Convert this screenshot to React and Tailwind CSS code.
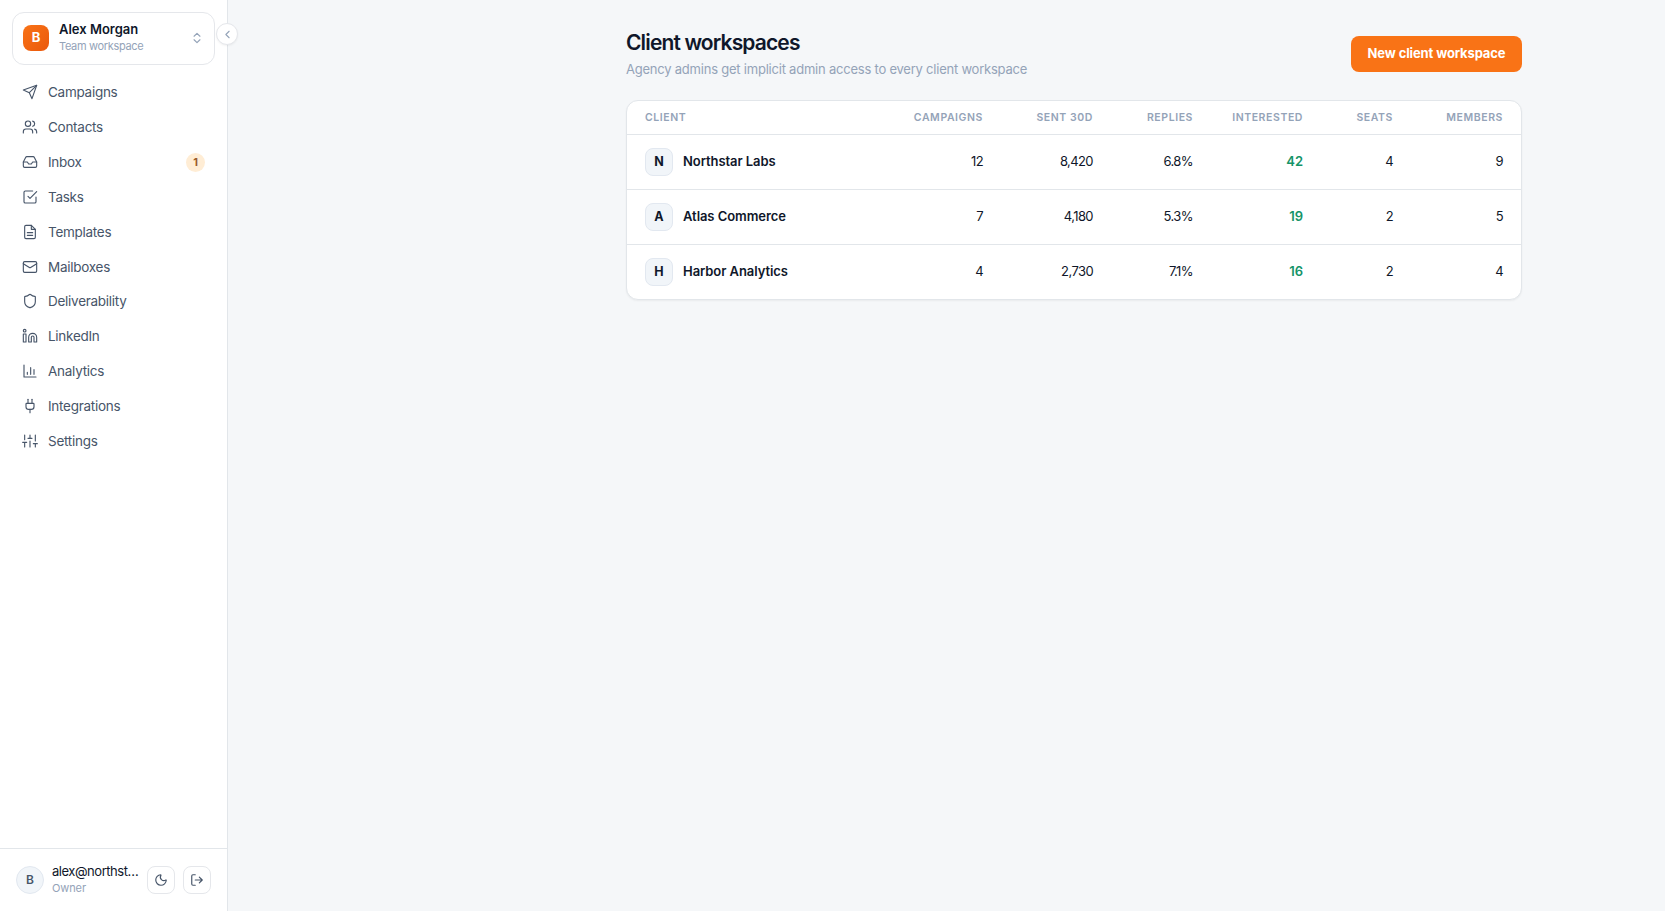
import React from "react";
import clsx from "clsx";
import {
  Users,
  Inbox,
  Mail,
  Shield,
  Linkedin,
  Plug,
  ChevronsUpDown,
  ChevronLeft,
  Moon,
} from "lucide-react";

const iconProps = {
  width: 16,
  height: 16,
  viewBox: "0 0 24 24",
  fill: "none",
  stroke: "currentColor",
  strokeWidth: 1.7,
  strokeLinecap: "round",
  strokeLinejoin: "round",
};

const SendIcon = () => (
  <svg {...iconProps}>
    <path d="M22 2L11 13" />
    <path d="M22 2l-7 20-4-9-9-4 20-7z" />
  </svg>
);

const TaskIcon = () => (
  <svg {...iconProps}>
    <path d="M9 11l3 3L22 4" />
    <path d="M21 12v7a2 2 0 0 1-2 2H5a2 2 0 0 1-2-2V5a2 2 0 0 1 2-2h11" />
  </svg>
);

const DocIcon = () => (
  <svg {...iconProps}>
    <path d="M14 2H6a2 2 0 0 0-2 2v16a2 2 0 0 0 2 2h12a2 2 0 0 0 2-2V8z" />
    <path d="M14 2v6h6M8 13h8M8 17h8" />
  </svg>
);

const ChartIcon = () => (
  <svg {...iconProps}>
    <path d="M3 3v18h18" />
    <path d="M8 17v-3M13 17V7M18 17v-7" />
  </svg>
);

const SlidersIcon = () => (
  <svg {...iconProps}>
    <path d="M4 21v-7M4 10V3M12 21v-9M12 8V3M20 21v-5M20 12V3M1 14h6M9 8h6M17 16h6" />
  </svg>
);

const LogoutIcon = () => (
  <svg {...iconProps} width={14} height={14} strokeWidth={2}>
    <path d="M9 21H5a2 2 0 0 1-2-2V5a2 2 0 0 1 2-2h4" />
    <path d="M16 17l5-5-5-5M21 12H9" />
  </svg>
);

const navItems = [
  { label: "Campaigns", icon: SendIcon },
  { label: "Contacts", icon: Users },
  { label: "Inbox", icon: Inbox, badge: 1 },
  { label: "Tasks", icon: TaskIcon },
  { label: "Templates", icon: DocIcon },
  { label: "Mailboxes", icon: Mail },
  { label: "Deliverability", icon: Shield },
  { label: "LinkedIn", icon: Linkedin },
  { label: "Analytics", icon: ChartIcon },
  { label: "Integrations", icon: Plug },
  { label: "Settings", icon: SlidersIcon },
];

const columns = ["Campaigns", "Sent 30d", "Replies", "Interested", "Seats", "Members"];

const clients = [
  { name: "Northstar Labs", values: ["12", "8,420", "6.8%", "42", "4", "9"] },
  { name: "Atlas Commerce", values: ["7", "4,180", "5.3%", "19", "2", "5"] },
  { name: "Harbor Analytics", values: ["4", "2,730", "7.1%", "16", "2", "4"] },
];

const rowGrid = "grid grid-cols-[1fr_110px_110px_100px_110px_90px_110px] items-center px-[18px]";

const Sidebar = () => (
  <aside className="relative flex w-[228px] shrink-0 flex-col border-r border-[#e2e6ea] bg-white">
    {/* Workspace switcher */}
    <div className="mx-3 mt-3 flex h-[53px] items-center rounded-xl border border-[#e5e7eb] pr-2.5 pb-0.5 pl-2.5">
      <div className="flex size-[26px] items-center justify-center rounded-lg bg-linear-to-br from-[#f97316] to-[#ea580c] text-[13px] font-bold text-white">
        B
      </div>
      <div className="ml-2.5 flex-1 pb-px">
        <p className="text-[13px] leading-[18px] font-semibold">Alex Morgan</p>
        <p className="text-[11px] leading-4 tracking-[-0.03em] text-[#94a3b8]">Team workspace</p>
      </div>
      <ChevronsUpDown size={14} className="text-[#94a3b8]" />
    </div>

    <button
      title="Collapse sidebar"
      className="absolute top-[23px] -right-[11px] flex size-[22px] items-center justify-center rounded-full border border-[#e5e7eb] bg-white text-[#94a3b8] shadow-xs"
    >
      <ChevronLeft size={13} />
    </button>

    <nav className="mt-[11px] flex flex-col gap-0.5 px-3">
      {navItems.map(({ label, icon: Icon, badge }) => (
        <a key={label} className="flex h-[32.85px] items-center gap-2.5 px-2.5 text-[13.5px] text-[#475569]">
          <Icon size={16} strokeWidth={1.7} />
          <span className="flex-1 tracking-[-0.02em]">{label}</span>
          {badge && (
            <span className="flex size-[19px] items-center justify-center rounded-full bg-[#ffedd5] text-[11px] font-bold text-[#9a5a2c]">
              {badge}
            </span>
          )}
        </a>
      ))}
    </nav>

    {/* Account */}
    <div className="mt-auto flex h-[63px] items-center border-t border-[#e2e6ea] px-4">
      <div className="flex size-7 shrink-0 items-center justify-center rounded-full border border-[#e2e8f0] bg-[#f1f5f9] text-xs font-semibold text-[#475569]">
        B
      </div>
      <div className="ml-2 w-[87px] pb-px whitespace-nowrap">
        <p className="text-[13px] leading-[17px] tracking-[-0.035em]">alex@northst…</p>
        <p className="text-[11px] leading-4 tracking-[-0.01em] text-[#94a3b8]">Owner</p>
      </div>
      <button title="Theme" className="ml-2 flex size-7 shrink-0 items-center justify-center rounded-lg border border-[#e5e7eb] text-[#475569]">
        <Moon size={14} strokeWidth={2} />
      </button>
      <button title="Log out" className="ml-2 flex size-7 shrink-0 items-center justify-center rounded-lg border border-[#e5e7eb] text-[#475569]">
        <LogoutIcon />
      </button>
    </div>
  </aside>
);

const ClientTable = () => (
  <div className="mt-[22px] overflow-hidden rounded-xl border border-[#e2e6ea] bg-white shadow-xs">
    <div className={clsx(rowGrid, "h-[33px] text-[10.5px] font-semibold tracking-[0.055em] text-[#94a3b8] uppercase")}>
      <span>Client</span>
      {columns.map((column) => (
        <span key={column} className="text-right">
          {column}
        </span>
      ))}
    </div>
    {clients.map((client) => (
      <div key={client.name} className={clsx(rowGrid, "h-[55px] border-t border-[#e2e6ea] text-[13px]")}>
        <div className="flex items-center gap-2.5 font-semibold">
          <span className="flex size-7 items-center justify-center rounded-lg border border-[#e2e8f0] bg-[#f1f5f9] text-[12.5px] font-bold">
            {client.name.charAt(0)}
          </span>
          <span className="tracking-[-0.005em]">{client.name}</span>
        </div>
        {client.values.map((value, i) => (
          <span
            key={columns[i]}
            className={clsx("text-right", columns[i] === "Interested" ? "font-semibold text-[#159468]" : "tracking-[-0.045em]")}
          >
            {value}
          </span>
        ))}
      </div>
    ))}
  </div>
);

const App = () => (
  <div className="flex h-screen overflow-hidden bg-[#f5f7f9] font-['Inter',sans-serif] text-[#0f172a]">
    <Sidebar />
    <main className="flex-1 pt-7 pr-[143px] pl-[398px]">
      <div className="flex h-[50px] items-center justify-between">
        <div>
          <h1 className="pt-px text-[21px] leading-7 font-semibold tracking-[-0.041em]">Client workspaces</h1>
          <p className="mt-0.5 text-[13px] leading-5 tracking-[-0.017em] text-[#94a3b8]">
            Agency admins get implicit admin access to every client workspace
          </p>
        </div>
        <button className="mt-0.5 h-9 w-[171px] rounded-lg bg-[#f97316] text-[13px] font-bold tracking-[-0.01em] text-white">
          New client workspace
        </button>
      </div>
      <ClientTable />
    </main>
  </div>
);

export default App;
